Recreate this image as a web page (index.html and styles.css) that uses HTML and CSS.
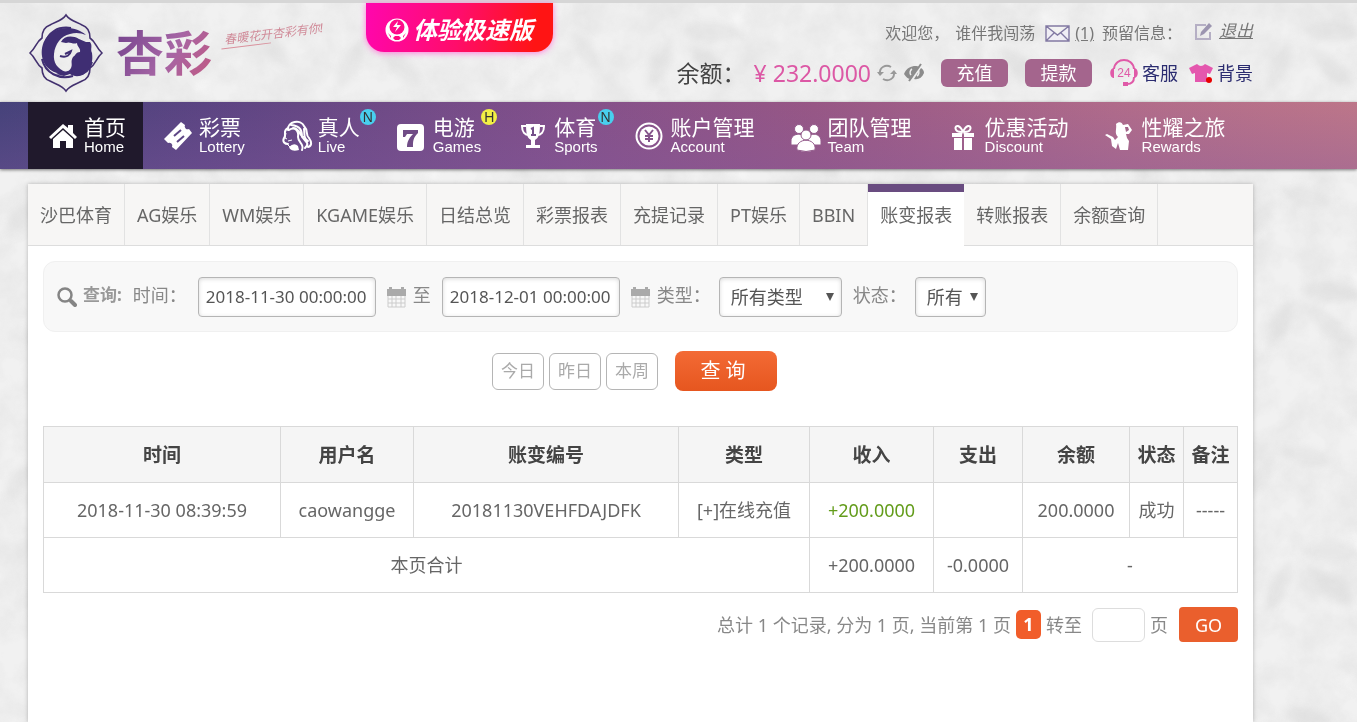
FILE: index.html
```html
<!DOCTYPE html>
<html lang="zh-CN">
<head>
    <meta charset="UTF-8">
    <meta name="viewport" content="width=device-width, initial-scale=1.0">
    <title>账变报表</title>
    <link rel="stylesheet" href="styles.css">
</head>
<body>
    <!-- Paper texture behind the page -->
    <svg class="texture" aria-hidden="true">
        <defs>
            <filter id="soft"><feGaussianBlur stdDeviation="3"/></filter>
            <filter id="paper">
                <feTurbulence type="fractalNoise" baseFrequency="0.03" numOctaves="4" seed="8"/>
                <feColorMatrix values="0 0 0 0 0.6  0 0 0 0 0.6  0 0 0 0 0.6  0.5 0 0 0 -0.16"/>
            </filter>
            <pattern id="leaves" width="310" height="260" patternUnits="userSpaceOnUse">
                <g filter="url(#soft)" fill="#e7e7e7">
                    <path d="M60 30q30-20 62 4q-34 18-62-4zM52 40q2 34-24 50q-6-32 24-50zM70 48q32 4 44 38q-36-4-44-38z"/>
                    <path d="M190 120q30-26 60-8q-24 26-60 8zM184 130q-30 12-52-12q30-14 52 12zM196 134q26 16 22 48q-28-16-22-48z"/>
                    <path d="M40 190q32-12 54 14q-34 10-54-14zM34 200q-4 30-28 38q-2-28 28-38zM270 210q20-26 38-18q-8 28-38 18zM262 30q24 10 30 40q-30-6-30-40z"/>
                </g>
                <g filter="url(#soft)" fill="#f6f6f6">
                    <path d="M110 10q20 8 26 30q-22-6-26-30zM230 60q-10 26-34 30q4-26 34-30zM100 150q22 6 30 30q-26-4-30-30zM150 220q24-12 44 4q-22 16-44-4z"/>
                </g>
            </pattern>
        </defs>
        <rect width="100%" height="100%" fill="url(#leaves)"/>
        <rect width="100%" height="100%" filter="url(#paper)"/>
    </svg>

    <header class="header">
        <a class="logo" href="#">
            <svg class="emblem" viewBox="0 0 76 80" aria-hidden="true">
                <path fill="none" stroke="#43316f" stroke-width="1.600" d="M38 2C42 8 49 9 54 12C60 14 62 19 62 25C68 29 68 35 74 40C68 45 68 51 62 55C62 61 60 66 54 68C49 71 42 72 38 78C34 72 27 71 22 68C16 66 14 61 14 55C8 51 8 45 2 40C8 35 8 29 14 25C14 19 16 14 22 12C27 9 34 8 38 2Z"/>
                <path fill="#3f2e73" d="M58 22C48 13 33 13 23 20C12 28 11 45 19 54C25 60 32 62 38 59C29 56 25 49 26 41C27 31 33 23 42 21C48 19 53 20 58 22Z"/>
                <path fill="#3f2e73" d="M33 29C36 23 44 22 51 26L58 29L62 29C65 33 62 36 64 40C65 47 64 55 57 60C53 64 46 64 42 61L36 63L28 61C34 58 41 60 43 55C45 51 42 49 45 44C48 42 48 39 52 39C53 35 49 34 49 30C45 32 42 28 38 30Z"/>
                <path fill="none" stroke="#3f2e73" stroke-width="2" d="M32 43C39 45 42 42 43 38L37 41"/>
                <path fill="none" stroke="#3f2e73" stroke-width="2" d="M14 46C17 60 31 67 45 63M17 31C20 19 30 13 43 15M50 62C58 61 62 56 64 49"/>
            </svg>
            <span class="brand">杏彩</span>
            <span class="slogan">春暖花开杏彩有你!</span>
        </a>

        <a class="promo" href="#">
            <svg viewBox="0 0 24 24" width="24" height="24" aria-hidden="true">
                <circle cx="12" cy="12" r="11.500" fill="#fff"/>
                <circle cx="12" cy="9" r="7.500" fill="#ff0c8a"/>
                <path fill="#fff" d="M13 3l-5 6h4l-2 5l6-7h-4z"/>
                <path fill="#ff0c80" d="M8 20l2-2h4l2 2l-2 2h-4zM3 15l3 3v2zM21 15l-3 3v2z"/>
            </svg>
            <span>体验极速版</span>
        </a>

        <div class="user">
            <div class="user-row">
                <span>欢迎您，</span>
                <span class="name">谁伴我闯荡</span>
                <a class="mail" href="#">
                    <svg viewBox="0 0 25 17" width="25" height="17" aria-hidden="true">
                        <path fill="#f0eef5" stroke="#8279a3" stroke-width="1.400" d="M1 1h23v15H1zM1 1l11.500 9L24 1M1 16l8-8M24 16l-8-8"/>
                    </svg>
                    <span>(1)</span>
                </a>
                <span>预留信息：</span>
                <a class="edit" href="#" aria-label="编辑">
                    <svg viewBox="0 0 18 18" width="18" height="18" aria-hidden="true">
                        <path fill="none" stroke="#b5afc4" stroke-width="2" d="M11 3H1v14h14v-7"/>
                        <path fill="#9c95b0" d="M6 10l8-9l3 3l-8 8l-4 2z"/>
                    </svg>
                </a>
                <a class="logout" href="#">退出</a>
            </div>
            <div class="user-row money">
                <span class="balance">余额：</span>
                <strong class="amount">¥ 232.0000</strong>
                <button class="icon-btn" type="button" aria-label="刷新">
                    <svg viewBox="0 0 20 20" width="20" height="20" aria-hidden="true">
                        <path fill="none" stroke="#999" stroke-width="2" d="M3 11C2 4 9 1 14 4M17 9c1 7-6 10-11 7"/>
                        <path fill="#999" d="M0 9h7l-4 4zM13 11h7l-3-4z"/>
                    </svg>
                </button>
                <button class="icon-btn" type="button" aria-label="隐藏">
                    <svg viewBox="0 0 20 20" width="20" height="20" aria-hidden="true">
                        <path fill="#8c8c8c" d="M0 11C3 3 12 2 15 4L7 16C4 16 2 14 0 11zM17 5c2 1 3 3 3 5c-2 5-6 7-10 6z"/>
                        <path fill="none" stroke="#eee" stroke-width="1.500" d="M8 6a4 4 0 0 0-1 6M14 7a4 4 0 0 1-1 6"/>
                        <path stroke="#8c8c8c" stroke-width="2" d="M17 1L5 18"/>
                    </svg>
                </button>
                <button class="pill" type="button">充值</button>
                <button class="pill" type="button">提款</button>
                <a class="tool" href="#">
                    <svg viewBox="0 0 28 28" width="28" height="28" aria-hidden="true">
                        <path fill="none" stroke="#e05aa8" stroke-width="2" d="M4 10C5-2 23-2 24 10M24 18c0 5-3 7-7 7"/>
                        <path fill="#e05aa8" d="M4 9v10C-1 19-1 9 4 9zM24 9v10C29 19 29 9 24 9zM13 23h5v4h-5z"/>
                        <text class="badge-24" x="14" y="18">24</text>
                    </svg>
                    <span>客服</span>
                </a>
                <a class="tool" href="#">
                    <svg viewBox="0 0 24 20" width="24" height="20" aria-hidden="true">
                        <path fill="#e457ae" d="M8 1q4 4 8 0l8 4l-3 6l-3-1v9H6v-9l-3 1l-3-6z"/>
                        <circle cx="20" cy="17" r="3" fill="#e80000"/>
                    </svg>
                    <span>背景</span>
                </a>
            </div>
        </div>
    </header>

    <nav class="nav">
        <a class="nav-item active" href="#">
            <svg viewBox="0 0 32 32" aria-hidden="true"><path fill="#fff" d="M2 17L16 4l5 4V5h5v8l4 4l-2 2L16 8L4 19z"/><path fill="#fff" d="M6 19l10-9l10 9v9h-7v-7h-6v7H6z"/></svg>
            <span class="label">首页<small>Home</small></span>
        </a>
        <a class="nav-item" href="#">
            <svg viewBox="0 0 32 32" aria-hidden="true"><path fill="#fff" d="M2 19L19 2l4 3a3 3 0 0 0 4 4l3 4L14 30l-4-3a3 3 0 0 0-4-4z"/><path stroke="#5d4685" stroke-width="2" d="M12 16l7-6M15 22l7-6"/></svg>
            <span class="label">彩票<small>Lottery</small></span>
        </a>
        <a class="nav-item" href="#">
            <svg viewBox="0 0 32 32" aria-hidden="true"><path fill="none" stroke="#fff" stroke-width="2" stroke-linecap="round" d="M7 10C6 1 20-1 23 6c5 5 1 9 5 12c3 4 3 8-1 9M7 8c-6 3-1 7-4 10c-2 4 1 6 4 6M10 5c10 1 11 6 11 12c4 5 8 6 3 11M8 10c6-4 10 1 9 7c0 6 7 7 4 13M23 9c1 6-1 8 4 12M12 8c7 0 6 7 10 9"/><path fill="none" stroke="#fff" d="M5 13l-1 5l2 1M7 21l4-1M6 24l3 3"/><path fill="#fff" d="M8 27q5-5 9-1l1 4q-6 2-9-1z"/></svg>
            <span class="label">真人<small>Live</small></span>
            <span class="mark new">N</span>
        </a>
        <a class="nav-item" href="#">
            <svg viewBox="0 0 32 32" aria-hidden="true"><rect x="1" y="4" width="27" height="27" rx="4" fill="#fff"/><path fill="#704c86" d="M7 10h15v3c-5 5-5 8-5 14h-6c0-6 3-10 6-13h-6l-2 3H7z"/></svg>
            <span class="label">电游<small>Games</small></span>
            <span class="mark hot">H</span>
        </a>
        <a class="nav-item" href="#">
            <svg viewBox="0 0 32 32" aria-hidden="true"><path fill="#fff" d="M9 4h14c0 9-1 14-5 16v5h5v3H9v-3h5v-5c-4-2-5-7-5-16z"/><path fill="none" stroke="#fff" stroke-width="2" d="M9 6H5c0 6 3 9 7 9M23 6h4c0 6-3 9-7 9"/><path fill="none" stroke="#75508a" stroke-width="2" d="M14 9l2-1v7M14 15h5"/></svg>
            <span class="label">体育<small>Sports</small></span>
            <span class="mark new">N</span>
        </a>
        <a class="nav-item" href="#">
            <svg viewBox="0 0 32 32" aria-hidden="true"><circle cx="15" cy="16" r="12.500" fill="none" stroke="#fff" stroke-width="2"/><circle cx="15" cy="16" r="9.500" fill="#fff"/><path fill="none" stroke="#84548b" stroke-width="2" d="M11 10l4 5l4-5M15 15v7M11 16h8M11 19h8"/></svg>
            <span class="label">账户管理<small>Account</small></span>
        </a>
        <a class="nav-item" href="#">
            <svg viewBox="0 0 32 32" aria-hidden="true"><g fill="#fff" stroke="#935a8b"><circle cx="8" cy="9" r="4.500"/><circle cx="23" cy="9" r="4.500"/><path d="M0 25v-4c0-9 15-9 15 0v4zM16 25v-4c0-9 14-9 14 0v4z"/><circle cx="15" cy="15" r="5"/><path d="M6 30c-2-13 20-13 18 0q-9 3-18 0z"/></g></svg>
            <span class="label">团队管理<small>Team</small></span>
        </a>
        <a class="nav-item" href="#">
            <svg viewBox="0 0 32 32" aria-hidden="true"><path fill="#fff" d="M4 13h10v4H4zM16 13h10v4H16zM6 18h8v12H6zM16 18h8v12h-8z"/><path fill="none" stroke="#fff" stroke-width="2" d="M14 12C5 12 7 5 10 6q3 1 5 6q2-5 5-6c3-1 5 6-4 6"/></svg>
            <span class="label">优惠活动<small>Discount</small></span>
        </a>
        <a class="nav-item" href="#">
            <svg viewBox="0 0 32 32" aria-hidden="true"><path fill="#fff" d="M11 4c3-3 6-2 7 1l5-1l4 6l-3 4h-3l1 4l2 3l-1 9h-8l-2-7l-2 6l-4-3l-1-7l-6-4l2-1l6 3l2 3l3-3c-4-4-1-8-2-13z"/><path fill="#a2648a" d="M20 7l3 0l1 3l-3 2z"/></svg>
            <span class="label">性耀之旅<small>Rewards</small></span>
        </a>
    </nav>

    <main class="panel">
        <div class="tabs">
            <a href="#">沙巴体育</a>
            <a href="#">AG娱乐</a>
            <a href="#">WM娱乐</a>
            <a href="#">KGAME娱乐</a>
            <a href="#">日结总览</a>
            <a href="#">彩票报表</a>
            <a href="#">充提记录</a>
            <a href="#">PT娱乐</a>
            <a href="#">BBIN</a>
            <a class="current" href="#">账变报表</a>
            <a href="#">转账报表</a>
            <a href="#">余额查询</a>
        </div>

        <form class="content">
            <div class="filters">
                <svg class="search" viewBox="0 0 20 20" width="20" height="20" aria-hidden="true"><circle cx="8" cy="8" r="6.500" fill="none" stroke="#858585" stroke-width="2.500"/><path stroke="#858585" stroke-width="4" stroke-linecap="round" d="M14 14l4 4"/></svg>
                <b class="title">查询:</b>
                <label for="from">时间：</label>
                <input class="date" id="from" type="text" value="2018-11-30 00:00:00">
                <svg class="calendar" viewBox="0 0 19 22" width="19" height="22" aria-hidden="true"><path fill="#aaa" d="M0 3h19v7H0zM2 1h3v4H2zM14 1h3v4h-3z"/><path fill="none" stroke="#ccc" d="M1 10v11h17V10M1 13h17M1 17h17M5 10v11M9 10v11M14 10v11"/></svg>
                <label for="until">至</label>
                <input class="date" id="until" type="text" value="2018-12-01 00:00:00">
                <svg class="calendar" viewBox="0 0 19 22" width="19" height="22" aria-hidden="true"><path fill="#aaa" d="M0 3h19v7H0zM2 1h3v4H2zM14 1h3v4h-3z"/><path fill="none" stroke="#ccc" d="M1 10v11h17V10M1 13h17M1 17h17M5 10v11M9 10v11M14 10v11"/></svg>
                <label for="type">类型：</label>
                <span class="select wide">
                    <select id="type"><option>所有类型</option></select>
                </span>
                <label for="state">状态：</label>
                <span class="select">
                    <select id="state"><option>所有</option></select>
                </span>
            </div>

            <div class="actions">
                <button class="day" type="button">今日</button>
                <button class="day" type="button">昨日</button>
                <button class="day" type="button">本周</button>
                <button class="query" type="button">查 询</button>
            </div>

            <table class="report">
                <colgroup>
                    <col class="c-time"><col class="c-user"><col class="c-id"><col class="c-type"><col class="c-in"><col class="c-out"><col class="c-balance"><col class="c-small"><col class="c-small">
                </colgroup>
                <thead>
                    <tr>
                        <th>时间</th>
                        <th>用户名</th>
                        <th>账变编号</th>
                        <th>类型</th>
                        <th>收入</th>
                        <th>支出</th>
                        <th>余额</th>
                        <th>状态</th>
                        <th>备注</th>
                    </tr>
                </thead>
                <tbody>
                    <tr>
                        <td>2018-11-30 08:39:59</td>
                        <td>caowangge</td>
                        <td>20181130VEHFDAJDFK</td>
                        <td>[+]在线充值</td>
                        <td class="plus">+200.0000</td>
                        <td></td>
                        <td>200.0000</td>
                        <td>成功</td>
                        <td>-----</td>
                    </tr>
                    <tr>
                        <td colspan="4">本页合计</td>
                        <td>+200.0000</td>
                        <td>-0.0000</td>
                        <td colspan="3">-</td>
                    </tr>
                </tbody>
            </table>

            <div class="pager">
                <span>总计 1 个记录, 分为 1 页, 当前第 1 页</span>
                <a class="page" href="#">1</a>
                <label for="page">转至</label>
                <input id="page" type="text">
                <span class="unit">页</span>
                <button class="go" type="button">GO</button>
            </div>
        </form>
    </main>
</body>
</html>
```

FILE: styles.css
```css
* {
    box-sizing: border-box;
}

body {
    margin: 0;
    min-height: 100vh;
    display: flex;
    flex-direction: column;
    background-color: #f1f1f1;
    font-family: "Noto Sans", "Noto Sans CJK SC", sans-serif;
    font-size: 18px;
    line-height: 24px;
    color: #666;
}

a {
    color: inherit;
    text-decoration: none;
}

button, input, select {
    font: inherit;
    color: inherit;
}

button {
    padding: 0;
    border: none;
    cursor: pointer;
}

svg {
    flex: none;
    display: block;
}

.texture {
    position: fixed;
    inset: 0;
    width: 100%;
    height: 100%;
    z-index: -1;
}

/* Header */
.header {
    display: flex;
    align-items: flex-start;
    height: 102px;
    padding: 0 104px 0 28px;
    border-top: 3px solid #d6d6d6;
}

.logo {
    display: flex;
    align-items: flex-start;
    width: 338px;
    padding-top: 10px;
}

.emblem {
    width: 76px;
    height: 80px;
}

.brand {
    margin: 8px 0 0 12px;
    font-size: 48px;
    line-height: 64px;
    font-weight: 700;
    background: linear-gradient(120deg, #71418c, #a665a5 55%, #c4587f);
    -webkit-background-clip: text;
    background-clip: text;
    color: transparent;
}

.slogan {
    margin: 12px 0 0 8px;
    padding: 0 4px;
    font-size: 12px;
    line-height: 18px;
    font-style: italic;
    color: #d08a98;
    white-space: nowrap;
    transform: rotate(-7deg);
    background: linear-gradient(#d9909c, #d9909c) left bottom / 50px 1px no-repeat;
}

.promo {
    display: flex;
    align-items: center;
    gap: 4px;
    height: 49px;
    padding: 4px 20px 0 19px;
    border-radius: 0 0 18px 18px;
    background: linear-gradient(100deg, #ff06ae, #ff0d6a 50%, #ff1414 90%);
    box-shadow: 0 1px 6px #ff7ad9;
    color: #fff;
    font-size: 24px;
    font-weight: 700;
    font-style: italic;
    white-space: nowrap;
}

.user {
    display: flex;
    flex-direction: column;
    align-items: flex-end;
    gap: 12px;
    margin-left: auto;
    padding-top: 16px;
}

.user-row {
    display: flex;
    align-items: center;
    font-size: 16px;
    color: #777;
    white-space: nowrap;
}

.name {
    margin: 0 10px 0 6px;
}

.mail {
    display: flex;
    align-items: center;
    gap: 5px;
    margin-right: 8px;
}

.mail span, .logout {
    text-decoration: underline;
}

.edit {
    margin: 0 6px 4px 13px;
}

.logout {
    margin-bottom: 4px;
    font-size: 17px;
    font-style: italic;
}

.money {
    font-size: 18px;
}

.balance {
    font-size: 23px;
    color: #444;
}

.amount {
    margin: 0 6px 0 8px;
    font-size: 23px;
    font-weight: 400;
    color: #dc58a5;
}

.icon-btn {
    margin-right: 7px;
    background: none;
}

.pill {
    width: 67px;
    height: 28px;
    margin: 0 7px 0 10px;
    border-radius: 6px;
    background-color: #a4658d;
    color: #fff;
}

.tool {
    display: flex;
    align-items: center;
    gap: 4px;
    margin-left: 11px;
    color: #2b2c70;
}

.badge-24 {
    font: 12px "Liberation Sans", sans-serif;
    text-anchor: middle;
    fill: #e05aa8;
}

/* Main navigation */
.nav {
    display: flex;
    height: 67px;
    padding-left: 28px;
    background: linear-gradient(rgba(60, 60, 110, 0), rgba(130, 90, 160, 0.3)), linear-gradient(90deg, #45427a, #5b4482 15%, #83508a 42%, #975785 60%, #b06b8a 82%, #bd7689);
    box-shadow: 0 1px 3px rgba(0, 0, 0, 0.5);
}

.nav-item {
    position: relative;
    display: flex;
    align-items: center;
    gap: 5px;
    padding: 0 17px 0 19px;
    color: #fff;
    font-size: 21px;
    white-space: nowrap;
}

.nav-item.active {
    background-color: #20192c;
}

.nav-item svg {
    width: 32px;
    height: 32px;
}

.label {
    padding-bottom: 2px;
}

.label small {
    display: block;
    font-family: "Liberation Sans", sans-serif;
    font-size: 15px;
    line-height: 15px;
}

.mark {
    position: absolute;
    top: 7px;
    right: 1px;
    width: 16px;
    height: 16px;
    border-radius: 50%;
    font: 14px/16px "Liberation Sans", sans-serif;
    text-align: center;
    color: #333;
}

.new {
    background-color: #48cfee;
}

.hot {
    background-color: #f2f044;
}

/* Report panel */
.panel {
    flex: 1;
    margin: 15px 104px 0 28px;
    background-color: #fff;
    box-shadow: 0 0 4px rgba(0, 0, 0, 0.25);
}

.tabs {
    display: flex;
    height: 62px;
    background-color: #f7f6f5;
    border-bottom: 1px solid #ddd;
}

.tabs a {
    padding: 0 12px;
    border-right: 1px solid #e2e2e2;
    line-height: 62px;
    white-space: nowrap;
}

.tabs .current {
    height: 62px;
    border-top: 8px solid #694c80;
    border-right: none;
    background-color: #fff;
    line-height: 46px;
}

.content {
    padding: 15px;
}

.filters {
    display: flex;
    align-items: center;
    height: 71px;
    padding: 0 13px;
    border: 1px solid #f0f0f0;
    border-radius: 12px;
    background-color: #f8f8f8;
    color: #888;
    white-space: nowrap;
}

.filters label, .filters .title {
    padding-bottom: 3px;
}

.title {
    margin: 0 11px 0 6px;
    font-size: 17px;
    color: #999;
}

.date, .select select {
    height: 40px;
    border: 1px solid #b5b5b5;
    border-radius: 4px;
    background-color: #fff;
    box-shadow: inset 0 1px 4px rgba(0, 0, 0, 0.15);
    color: #555;
}

.date {
    width: 178px;
    margin: 0 11px;
    padding: 0 7px;
    font-size: 17px;
}

.calendar {
    margin-right: 7px;
}

.select {
    position: relative;
    width: 71px;
    margin: 0 11px 0 8px;
}

.select.wide {
    width: 123px;
}

.select select {
    width: 100%;
    padding: 0 0 0 11px;
    appearance: none;
}

.select::after {
    content: "";
    position: absolute;
    top: 16px;
    right: 8px;
    border: 4px solid transparent;
    border-top: 8px solid #555;
    border-bottom: none;
    pointer-events: none;
}

.actions {
    display: flex;
    justify-content: center;
    align-items: center;
    gap: 5px;
    margin: 19px 12px 35px 0;
}

.day {
    width: 52px;
    height: 37px;
    border: 1px solid #b5b5b5;
    border-radius: 6px;
    background-color: #fff;
    color: #aaa;
    font-size: 17px;
}

.query {
    width: 102px;
    height: 40px;
    margin-left: 12px;
    padding-right: 6px;
    border-radius: 8px;
    background: linear-gradient(#f36a35, #e6561f);
    color: #fff;
    font-size: 20px;
}

.report {
    width: 100%;
    table-layout: fixed;
    border-collapse: collapse;
    text-align: center;
}

.report th, .report td {
    height: 55px;
    padding: 0;
    border: 1px solid #d9d9d9;
    white-space: nowrap;
}

.report th {
    height: 56px;
    background-color: #f5f5f5;
    color: #444;
    font-size: 19px;
}

.c-time {
    width: 237px;
}

.c-user {
    width: 133px;
}

.c-id {
    width: 265px;
}

.c-type {
    width: 131px;
}

.c-in {
    width: 124px;
}

.c-out {
    width: 89px;
}

.c-balance {
    width: 107px;
}

.c-small {
    width: 54px;
}

.report .plus {
    color: #639c1b;
}

.pager {
    display: flex;
    justify-content: flex-end;
    align-items: center;
    gap: 5px;
    margin-top: 14px;
    color: #888;
    white-space: nowrap;
}

.page {
    width: 25px;
    border-radius: 5px;
    background-color: #f15d2a;
    color: #fff;
    font-weight: 700;
    line-height: 29px;
    text-align: center;
}

.pager input {
    width: 53px;
    height: 34px;
    margin-left: 5px;
    border: 1px solid #ddd;
    border-radius: 6px;
    background-color: #fff;
}

.unit {
    margin-right: 6px;
}

.go {
    width: 59px;
    height: 35px;
    border-radius: 4px;
    background-color: #ea5f2d;
    color: #fff;
}
```
